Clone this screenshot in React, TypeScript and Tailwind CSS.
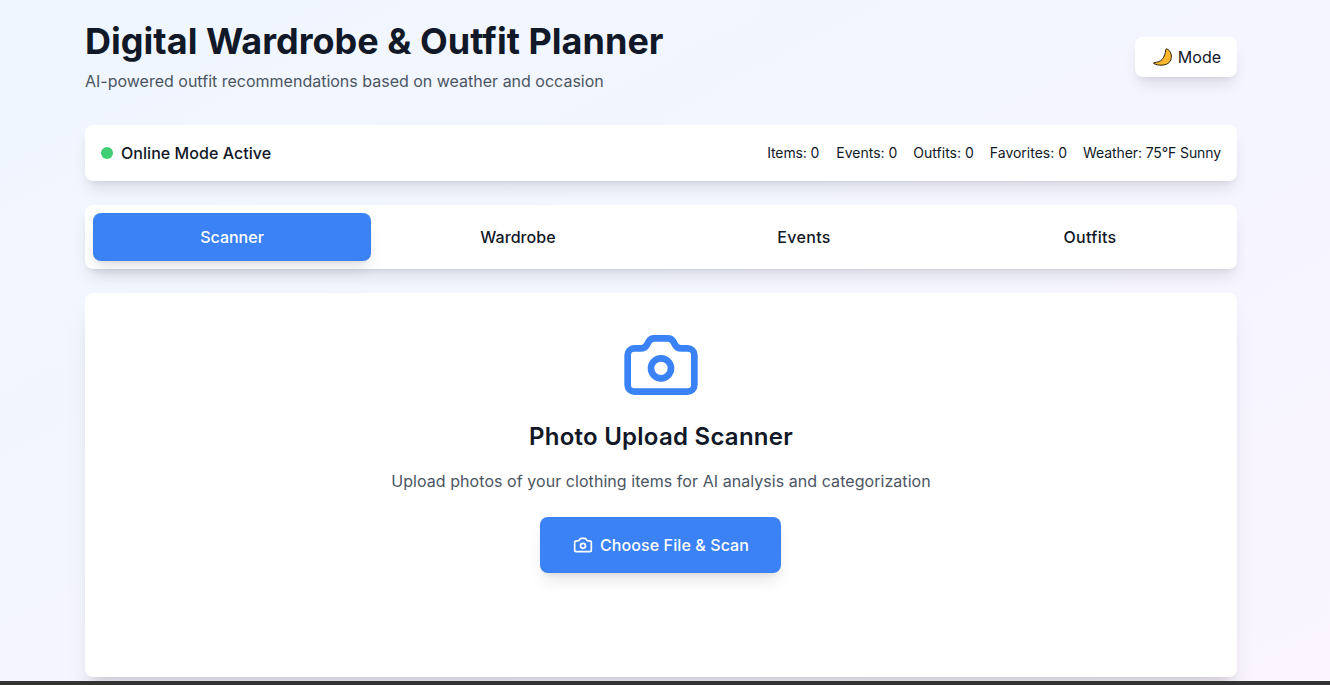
import { Camera } from "lucide-react";

const stats = [
  { t: "Items: 0", c: "tracking-[-0.12px] mr-[1px]" },
  { t: "Events: 0", c: "" },
  { t: "Outfits: 0", c: "" },
  { t: "Favorites: 0", c: "" },
  { t: "Weather: 75°F Sunny", c: "tracking-[-0.1px]" },
];
const tabs = [
  { t: "Scanner", c: "" },
  { t: "Wardrobe", c: "tracking-[0.05px]" },
  { t: "Events", c: "tracking-[0.36px]" },
  { t: "Outfits", c: "tracking-[0.28px]" },
];

function Moon() {
  return (
    <svg viewBox="0 0 19 18" className="h-[18px] w-[19px] shrink-0">
      <path
        d="M13.5 .8C15.5 1.5 17.8 3.5 18.3 7C18.9 10.5 17.6 13.6 15 15.4C11.5 17.8 5 17.6 .8 15.6C.4 15.2 .5 14.7 1 14.6C4 14.4 7.2 13.6 9.2 11.4C11.2 9 12.6 5 12.8 1.4C12.9 1 13.2 .8 13.5 .8Z"
        fill="#fbb62c"
        stroke="#2b2412"
        strokeWidth="1"
      />
    </svg>
  );
}

export default function App() {
  return (
    <div className="flex h-[685px] w-full flex-col overflow-hidden font-['Inter',sans-serif]">
      <div className="min-h-0 flex-1 bg-gradient-to-br from-[#eff6ff] to-[#faf5ff] pr-2">
        <div className="mx-auto flex h-full max-w-6xl flex-col">
          <header className="flex h-[125px] items-start justify-between pt-[21px]">
            <div>
              <h1 className="text-4xl font-bold tracking-[0.02px] text-[#111827]">Digital Wardrobe &amp; Outfit Planner</h1>
              <p className="mt-2 text-base text-[#4b5563]">AI-powered outfit recommendations based on weather and occasion</p>
            </div>
            <button className="mt-4 flex h-10 items-center gap-1.5 rounded-lg bg-white pl-[18px] pr-4 text-base text-[#111827] shadow-lg">
              <Moon />
              <span>Mode</span>
            </button>
          </header>

          <section className="flex h-14 items-center justify-between rounded-lg bg-white px-4 shadow-lg">
            <div className="flex items-center gap-2">
              <span className="h-3 w-3 rounded-full bg-[#3fce73]"></span>
              <span className="text-base font-medium tracking-[0.05px] text-[#111827]">Online Mode Active</span>
            </div>
            <div className="flex gap-4 text-sm text-[#111827]">
              {stats.map((s) => (
                <span key={s.t} className={s.c}>{s.t}</span>
              ))}
            </div>
          </section>

          <nav className="mt-6 flex h-16 gap-2 rounded-lg bg-white p-2 shadow-lg">
            {tabs.map((t, i) => (
              <button
                key={t.t}
                className={
                  i === 0
                    ? "flex-1 rounded-lg bg-[#3b82f6] text-base font-medium text-white shadow-lg"
                    : "flex-1 rounded-lg text-base font-medium text-[#111827]"
                }
              >
                <span className={t.c}>{t.t}</span>
              </button>
            ))}
          </nav>

          <main className="mt-6 flex h-[384px] flex-col items-center rounded-lg bg-white pt-8 shadow-xl">
            <Camera className="h-20 w-20 text-[#3b82f6]" strokeWidth={2} />
            <h2 className="mt-4 text-2xl font-semibold tracking-[0.25px] text-[#111827]">Photo Upload Scanner</h2>
            <p className="mt-4 text-base tracking-[0.056px] text-[#4b5563]">Upload photos of your clothing items for AI analysis and categorization</p>
            <button className="mt-6 mr-px flex h-14 items-center gap-[7px] rounded-lg bg-[#3b82f6] pl-[33px] pr-8 text-base font-medium tracking-[0.1px] text-white shadow-lg">
              <Camera className="h-5 w-5" strokeWidth={2} />
              <span>Choose File &amp; Scan</span>
            </button>
          </main>
        </div>
      </div>
      <div className="h-1 shrink-0 bg-[#333333]"></div>
    </div>
  );
}
